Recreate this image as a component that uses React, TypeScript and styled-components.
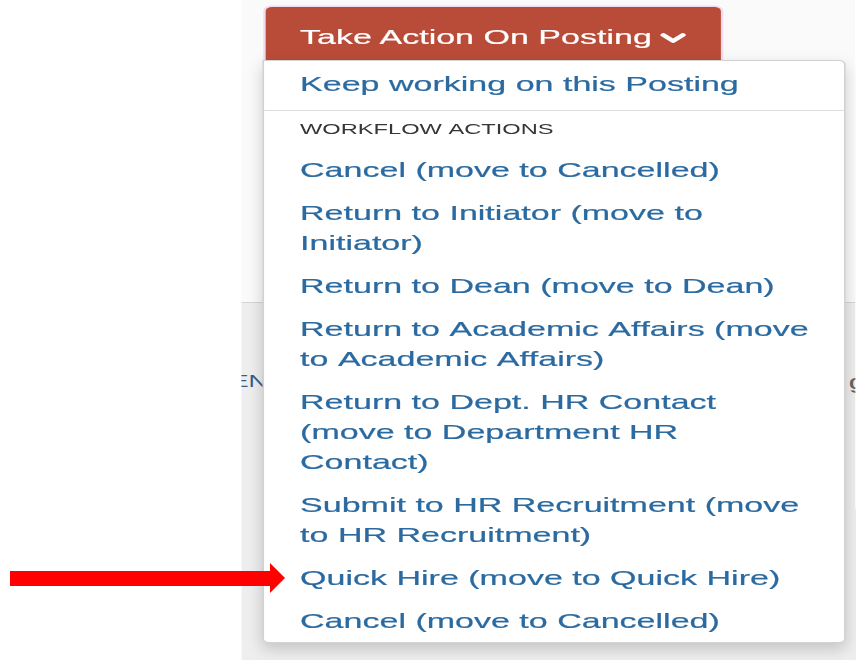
import React from 'react';
import styled, { createGlobalStyle } from 'styled-components';

// the whole capture is drawn at a wide horizontal stretch
const STRETCH = 1.62;
const px = (n: number) => `${(n / STRETCH).toFixed(2)}px`;

const GlobalStyle = createGlobalStyle`
  html, body {
    margin: 0;
    padding: 0;
    background: #ffffff;
    overflow: hidden;
  }
  body {
    font-family: "Liberation Sans", Arial, sans-serif;
    font-kerning: none;
  }
`;

const Stage = styled.div`
  position: relative;
  width: ${px(856)};
  height: 660px;
  transform: scaleX(${STRETCH});
  transform-origin: 0 0;
  overflow: hidden;
`;

const Backdrop = styled.div`
  margin-left: ${px(241)};
  height: 100%;
  display: flex;
  flex-direction: column;
  overflow: hidden;
`;

const BackdropTop = styled.div`
  flex-shrink: 0;
  height: 302px;
  background: #fafafa;
  border-bottom: 1px solid #d5d5d5;
`;

const BackdropBody = styled.div`
  flex: 1;
  display: flex;
  justify-content: space-between;
  align-items: flex-start;
  padding-top: 64px;
  background: #eeeeee;
  line-height: 30px;
`;

const BackLabel = styled.span<{ $tone: string; $size: number }>`
  color: ${(p) => p.$tone};
  font-size: ${(p) => p.$size}px;
  white-space: nowrap;
`;

const ActionGroup = styled.div`
  position: absolute;
  top: 7px;
  left: ${px(262)};
  width: ${px(584)};
`;

const ActionButton = styled.button`
  display: flex;
  align-items: center;
  gap: 5px;
  height: 53px;
  margin-left: 2px;
  padding: 6px 21px 0 21.5px;
  box-sizing: border-box;
  border: none;
  border-radius: 4px 4px 0 0;
  background: #b94c38;
  color: #ffffff;
  font-family: "Liberation Sans", Arial, sans-serif;
  font-size: 21px;
  -webkit-text-stroke: 0.2px #ffffff;
  box-shadow: 0 0 0 1.5px #f1dcef;
  cursor: pointer;

  svg {
    margin-top: 3px;
  }
`;

const Menu = styled.ul`
  list-style: none;
  margin: 0;
  padding: 1px 0 0;
  width: 100%;
  box-sizing: border-box;
  background: #ffffff;
  border: 1px solid #d2d2d2;
  border-radius: 0 4px 4px 4px;
  box-shadow: 0 6px 12px rgba(0, 0, 0, 0.18);
`;

const MenuItem = styled.li`
  padding: 6.5px 20px 6.5px 22.5px;
  font-size: 21px;
  line-height: 30px;
  color: #2a6aa0;
  -webkit-text-stroke: 0.2px #2a6aa0;
  cursor: pointer;
`;

const Divider = styled.li`
  height: 1px;
  margin: 5px 0 0;
  background: #dedede;
`;

const MenuHeader = styled.li`
  padding: 8px 20px 9px 22.5px;
  font-size: 14.6px;
  line-height: 20px;
  text-transform: uppercase;
  color: #363636;
`;

const Pointer = styled.svg`
  position: absolute;
  left: 0;
  top: 563px;
`;

const workflowActions = [
  'Cancel (move to Cancelled)',
  'Return to Initiator (move to Initiator)',
  'Return to Dean (move to Dean)',
  'Return to Academic Affairs (move to Academic Affairs)',
  'Return to Dept. HR Contact (move to Department HR Contact)',
  'Submit to HR Recruitment (move to HR Recruitment)',
  'Quick Hire (move to Quick Hire)',
  'Cancel (move to Cancelled)',
];

const Chevron = () => (
  <svg width="17" height="13" viewBox="0 0 17 13">
    <polyline
      points="2.5,3 8.5,9 14.5,3"
      fill="none"
      stroke="#ffffff"
      strokeWidth="3.6"
      strokeLinecap="round"
      strokeLinejoin="round"
    />
  </svg>
);

const App: React.FC = () => {
  return (
    <>
      <GlobalStyle />
      <Stage>
        <Backdrop>
          <BackdropTop />
          <BackdropBody>
            <BackLabel $tone="#355d8e" $size={16} style={{ marginLeft: -6 }}>
              EN
            </BackLabel>
            <BackLabel $tone="#666666" $size={21} style={{ marginRight: -7 }}>
              g
            </BackLabel>
          </BackdropBody>
        </Backdrop>

        <ActionGroup>
          <ActionButton type="button">
            Take Action On Posting
            <Chevron />
          </ActionButton>
          <Menu>
            <MenuItem>Keep working on this Posting</MenuItem>
            <Divider />
            <MenuHeader>Workflow Actions</MenuHeader>
            {workflowActions.map((label, i) => (
              <MenuItem key={i}>{label}</MenuItem>
            ))}
          </Menu>
        </ActionGroup>

        <Pointer width={(856 / STRETCH).toFixed(2)} height="30" viewBox={`0 0 ${856 / STRETCH} 30`}>
          <rect x={10 / STRETCH} y="8" width={(272 - 10) / STRETCH} height="15" fill="#ff0000" />
          <polygon
            points={`${270 / STRETCH},0 ${285 / STRETCH},15 ${270 / STRETCH},30`}
            fill="#ff0000"
          />
        </Pointer>
      </Stage>
    </>
  );
};

export default App;
